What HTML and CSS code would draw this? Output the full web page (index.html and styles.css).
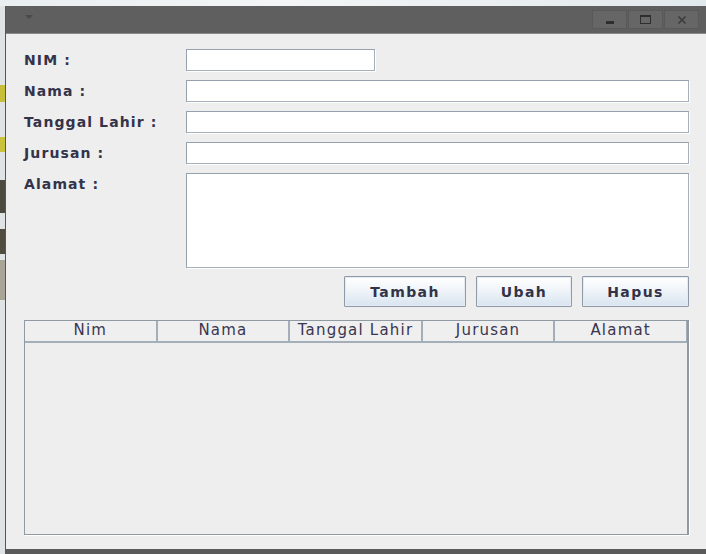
FILE: index.html
```html
<!DOCTYPE html>
<html>
<head>
<meta charset="utf-8">
<link rel="stylesheet" href="styles.css">
</head>
<body>
<div class="desktop">
  <div class="strip"><span class="s1"></span><span class="s2"></span><span class="s3"></span><span class="s4"></span><span class="s5"></span></div>
  <div class="window">
    <div class="titlebar">
      <span class="menu-tri"></span>
      <div class="controls">
        <span class="ctl"><span class="min"></span></span>
        <span class="ctl"><span class="max"></span></span>
        <span class="ctl"><svg width="10" height="10" viewBox="0 0 10 10"><path d="M1.5 1.5 L8.5 8.5 M8.5 1.5 L1.5 8.5" stroke="#3a3a3a" stroke-width="1.6"/></svg></span>
      </div>
    </div>
    <div class="content">
      <div class="form">
        <label class="lbl">NIM :</label><div class="field short"></div>
        <label class="lbl">Nama :</label><div class="field"></div>
        <label class="lbl">Tanggal Lahir :</label><div class="field"></div>
        <label class="lbl">Jurusan :</label><div class="field"></div>
        <label class="lbl">Alamat :</label><div class="field area"></div>
      </div>
      <div class="buttons">
        <button class="btn tambah">Tambah</button>
        <button class="btn ubah">Ubah</button>
        <button class="btn hapus">Hapus</button>
      </div>
      <div class="table">
        <div class="thead">
          <div class="th">Nim</div>
          <div class="th">Nama</div>
          <div class="th">Tanggal Lahir</div>
          <div class="th">Jurusan</div>
          <div class="th">Alamat</div>
        </div>
        <div class="tbody"></div>
      </div>
    </div>
  </div>
</div>
</body>
</html>
```
FILE: styles.css
```css
html, body { margin: 0; padding: 0; }
body {
  width: 706px; height: 554px; overflow: hidden;
  background: linear-gradient(90deg, #e9eef0 0%, #f3f5f6 40%, #e2e9ec 100%);
  font-family: "DejaVu Sans", sans-serif;
}
.desktop { display: flex; padding-top: 6px; height: 548px; }
.strip { width: 5px; display: flex; flex-direction: column; background: #dfe3e4; padding-top: 79px; }
.strip span { display: block; width: 5px; }
.strip .s1 { height: 17px; background: #c7bf3a; margin-bottom: 35px; }
.strip .s2 { height: 15px; background: #c9c23c; margin-bottom: 28px; }
.strip .s3 { height: 33px; background: #4c4a3e; margin-bottom: 16px; }
.strip .s4 { height: 25px; background: #504d40; margin-bottom: 6px; }
.strip .s5 { height: 40px; background: #a8a596; }
.window {
  flex: 1; display: flex; flex-direction: column;
  border-left: 1px solid #565656; border-bottom: 5px solid #5a5a5a;
  background: #eeeeee;
}
.titlebar {
  height: 27px; background: #5f5f5f; border-bottom: 1px solid #8a8a8a;
  display: flex; align-items: center; justify-content: space-between;
  padding: 0 7px 0 19px;
}
.menu-tri {
  width: 0; height: 0; border-left: 4px solid transparent; border-right: 4px solid transparent;
  border-top: 4px solid #4a4a4a; margin-top: -6px;
}
.controls { display: flex; gap: 1px; }
.ctl {
  width: 35px; height: 19px; background: #666666; border: 1px solid #595959;
  display: flex; align-items: center; justify-content: center; box-sizing: border-box;
}
.min { width: 8px; height: 3px; background: #2e2e2e; margin-top: 5px; }
.max { width: 9px; height: 6px; border: 1px solid #2e2e2e; border-top-width: 2px; }
.content { padding: 15px 17px 0 18px; display: flex; flex-direction: column; }
.form {
  display: grid; grid-template-columns: 162px 1fr; row-gap: 9px;
  color: #33334a; font-weight: bold; font-size: 14px; letter-spacing: 1.1px;
}
.lbl { line-height: 22px; }
.field {
  height: 22px; box-sizing: border-box; background: #fff;
  border: 1px solid #a6b0bb; border-top-color: #95a1ad; border-left-color: #95a1ad;
  box-shadow: 1px 1px 0 #ffffff;
}
.field.short { width: 189px; }
.field.area { height: 95px; }
.buttons { display: flex; justify-content: flex-end; gap: 10px; margin-top: 8px; }
.btn {
  height: 31px; font-family: "DejaVu Sans", sans-serif; font-weight: bold; font-size: 14px;
  letter-spacing: 1.4px;
  color: #333348; border: 1px solid #8e9aa8; border-radius: 1px;
  background: linear-gradient(#ffffff 0%, #f2f6fa 40%, #d8e4ef 100%);
  box-shadow: inset 0 0 0 1px #e4ebf2; padding: 0;
}
.tambah { width: 122px; }
.ubah { width: 96px; }
.hapus { width: 107px; }
.table {
  margin-top: 13px; height: 215px; box-sizing: border-box;
  border: 1px solid #8f9aa5; border-right-width: 2px; display: flex; flex-direction: column;
  box-shadow: 1px 1px 0 #ffffff;
}
.thead { display: flex; height: 20px; border-bottom: 2px solid #a4aeb8; }
.th {
  flex: 1; text-align: center; font-size: 15px; letter-spacing: 1.2px; line-height: 19px; color: #3a3550;
  border-right: 2px solid #a4aeb8; background: #efefef;
}
.th:last-child { border-right: 1px solid #a4aeb8; }
.tbody { flex: 1; }
```
